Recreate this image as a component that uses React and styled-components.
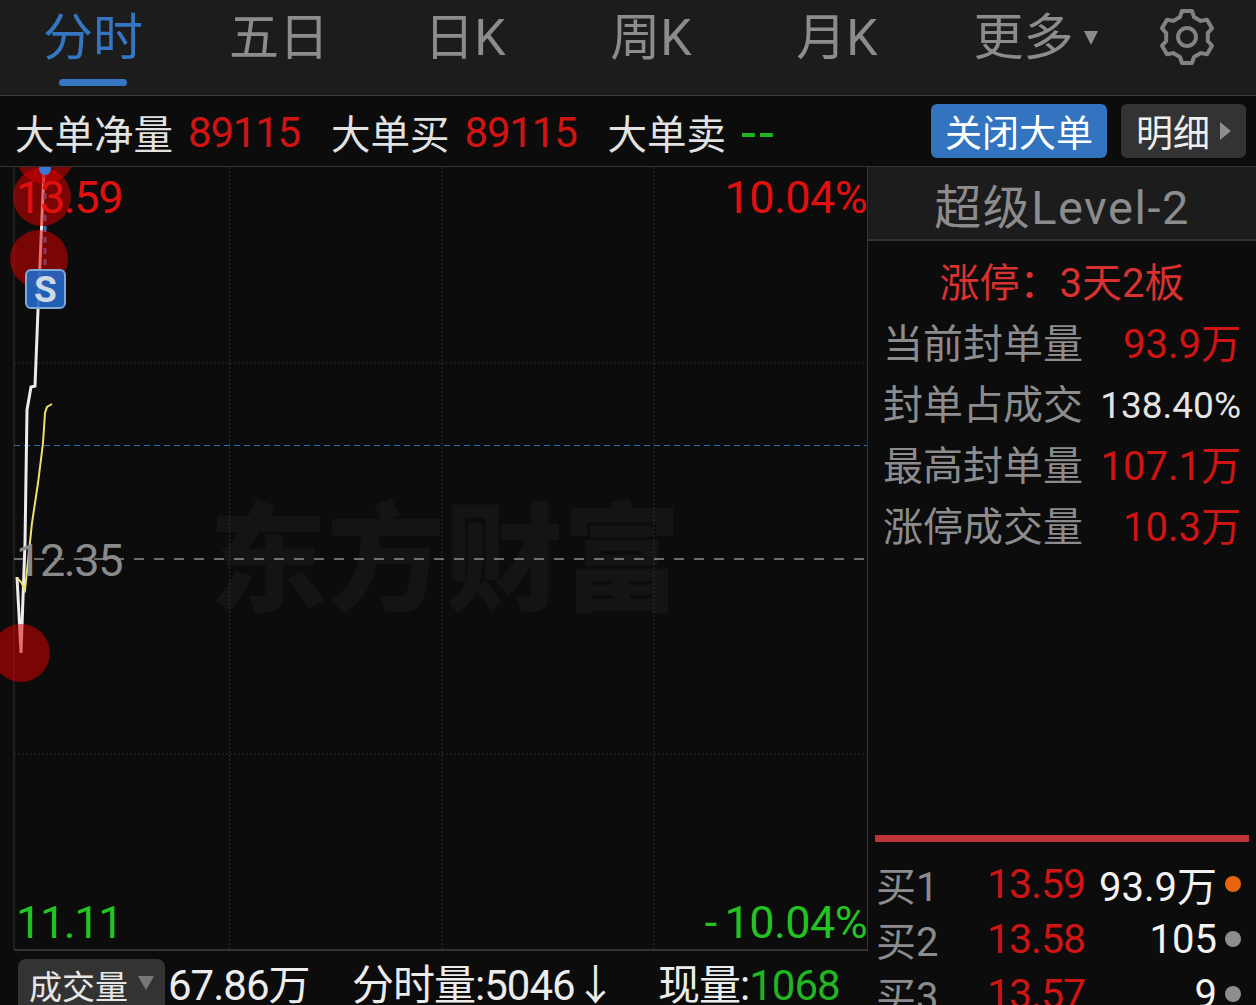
import React from 'react';
import styled, { createGlobalStyle } from 'styled-components';

const RED = '#d01414';
const GREEN = '#22b522';
const GRAY = '#8c8c8e';

const tabs = ['分时', '五日', '日K', '周K', '月K'];
const sealRows = [
	{ label: '当前封单量', value: '93.9万', color: RED, size: 40 },
	{ label: '封单占成交', value: '138.40%', color: '#e4e4e4', size: 37 },
	{ label: '最高封单量', value: '107.1万', color: RED, size: 40 },
	{ label: '涨停成交量', value: '10.3万', color: RED, size: 40 },
];
const bids = [
	{ label: '买1', price: '13.59', volume: '93.9万', dot: '#e8640f' },
	{ label: '买2', price: '13.58', volume: '105', dot: '#8e8e92' },
	{ label: '买3', price: '13.57', volume: '9', dot: '#8e8e92' },
];

// six flat teeth, one outline rotated around the centre
function gearPath() {
	const tooth = [
		[-7, -20],
		[-5, -26],
		[5, -26],
		[7, -20],
	];
	const points = [];
	for (let k = 0; k < 6; k++) {
		const a = (k * Math.PI) / 3;
		tooth.forEach(([x, y]) => {
			const px = 30 + x * Math.cos(a) - y * Math.sin(a);
			const py = 30 + x * Math.sin(a) + y * Math.cos(a);
			points.push(`${px.toFixed(1)} ${py.toFixed(1)}`);
		});
	}
	return `M${points.join('L')}Z`;
}

function GearIcon() {
	return (
		<svg width='60' height='60' viewBox='0 0 60 60' fill='none' stroke='#828284' strokeWidth='4'>
			<path d={gearPath()} strokeLinejoin='round' />
			<circle cx='30' cy='30' r='9' />
		</svg>
	);
}

function PriceChart() {
	return (
		<ChartSvg viewBox='0 0 868 784'>
			<g stroke='#2c2c2c' strokeWidth='1' strokeDasharray='2 2'>
				<line x1='229.5' y1='0' x2='229.5' y2='782' />
				<line x1='442' y1='0' x2='442' y2='782' />
				<line x1='654' y1='0' x2='654' y2='782' />
				<line x1='14' y1='196' x2='867' y2='196' />
				<line x1='14' y1='587' x2='867' y2='587' />
			</g>
			<line x1='14' y1='0' x2='14' y2='783' stroke='#333' />
			<line x1='867.5' y1='0' x2='867.5' y2='784' stroke='#333' />
			<line x1='14' y1='783' x2='868' y2='783' stroke='#333' strokeWidth='2' />
			<line x1='14' y1='278.5' x2='867' y2='278.5' stroke='#2f6cae' strokeDasharray='6 4' />
			<line x1='14' y1='392' x2='867' y2='392' stroke='#8e8e8e' strokeWidth='1.5' strokeDasharray='10 10' />
			<polyline
				points='17,410 21,486 25,376 27,243 31,220 35,219 38,143 44,3'
				fill='none'
				stroke='#ececec'
				strokeWidth='3'
			/>
			<polyline
				points='17,411 21,415 25,423 32,356 38,316 43,276 45,246 47,240 52,237'
				fill='none'
				stroke='#eee06a'
				strokeWidth='2'
			/>
			<line x1='45' y1='4' x2='45' y2='105' stroke='#3a78c8' strokeWidth='3' strokeDasharray='6 5' />
			<g fill='rgba(220,0,0,.53)'>
				<circle cx='45' cy='-12' r='29' />
				<circle cx='42' cy='30' r='29' />
				<circle cx='39' cy='92' r='29' />
				<circle cx='21' cy='486' r='29' />
			</g>
			<circle cx='45' cy='2' r='6' fill='#3a78d8' />
		</ChartSvg>
	);
}

export default function App() {
	return (
		<>
			<GlobalStyle />
			<Page>
				<TabBar>
					{tabs.map((tab, i) => (
						<Tab key={tab} $active={i === 0}>
							{tab}
						</Tab>
					))}
					<Tab>
						更多
						<MoreCaret />
					</Tab>
					<GearCell>
						<GearIcon />
					</GearCell>
				</TabBar>
				<OrderBar>
					<Stat>大单净量</Stat>
					<StatValue>89115</StatValue>
					<Stat>大单买</Stat>
					<StatValue>89115</StatValue>
					<Stat>大单卖</Stat>
					<EmptyValue>--</EmptyValue>
					<CloseButton>关闭大单</CloseButton>
					<DetailButton>
						明细
						<DetailCaret />
					</DetailButton>
				</OrderBar>
				<Main>
					<LeftColumn>
						<Chart>
							<Watermark>东方财富</Watermark>
							<PriceChart />
							<Marker>S</Marker>
							<AxisLabel $color='#e01010' $top={8}>
								13.59
							</AxisLabel>
							<AxisLabel $color='#e01010' $top={8} $right>
								10.04%
							</AxisLabel>
							<AxisLabel $color='#8a8a8a' $top={371}>
								12.35
							</AxisLabel>
							<AxisLabel $color='#22c322' $top={733}>
								11.11
							</AxisLabel>
							<AxisLabel $color='#22c322' $top={733} $right>
								<Minus>-</Minus>10.04%
							</AxisLabel>
						</Chart>
						<VolumeBar>
							<VolumeSelect>
								成交量
								<VolumeCaret />
							</VolumeSelect>
							<VolumeText $width={184} $first>
								67.86万
							</VolumeText>
							<VolumeText $width={306}>分时量:5046↓</VolumeText>
							<VolumeText>
								现量:<Green>1068</Green>
							</VolumeText>
						</VolumeBar>
					</LeftColumn>
					<Side>
						<SideHeader>超级Level-2</SideHeader>
						<LimitStatus>涨停{'\uFF1A'}3天2板</LimitStatus>
						{sealRows.map((row) => (
							<SealRow key={row.label}>
								<SealLabel>{row.label}</SealLabel>
								<SealValue $color={row.color} $size={row.size}>
									{row.value}
								</SealValue>
							</SealRow>
						))}
						<BookRule />
						{bids.map((bid) => (
							<BidRow key={bid.label}>
								<BidLabel>{bid.label}</BidLabel>
								<BidPrice>{bid.price}</BidPrice>
								<BidVolume>{bid.volume}</BidVolume>
								<BidDot $color={bid.dot} />
							</BidRow>
						))}
					</Side>
				</Main>
			</Page>
		</>
	);
}

const GlobalStyle = createGlobalStyle`
	html, body {
		margin: 0;
		background: #0c0c0c;
	}
	* {
		box-sizing: border-box;
	}
	body {
		font-family: Roboto, "Noto Sans CJK SC", sans-serif;
	}
`;
const Page = styled.div`
	width: 1256px;
	height: 1005px;
	overflow: hidden;
	background: #0c0c0c;
`;
const TabBar = styled.div`
	display: grid;
	grid-template-columns: repeat(6, 186px) 140px;
	height: 96px;
	background: #1c1c1c;
	border-bottom: 1px solid #3c3c3c;
`;
const Tab = styled.div`
	position: relative;
	display: flex;
	justify-content: center;
	padding-top: 5px;
	font-size: 50px;
	line-height: 66px;
	color: ${(p) => (p.$active ? '#3576c2' : GRAY)};
	${(p) =>
		p.$active &&
		`&::after {
		content: '';
		position: absolute;
		left: 59px;
		top: 79px;
		width: 68px;
		height: 7px;
		border-radius: 4px;
		background: #3576c2;
	}`}
`;
const MoreCaret = styled.span`
	align-self: flex-start;
	margin: 26px -25px 0 10px;
	border-top: 14px solid ${GRAY};
	border-left: 7.5px solid transparent;
	border-right: 7.5px solid transparent;
`;
const GearCell = styled.div`
	display: flex;
	justify-content: center;
	padding: 7px 0 0 2px;
`;
const OrderBar = styled.div`
	display: flex;
	align-items: center;
	height: 71px;
	padding: 0 10px 0 15px;
	border-bottom: 1px solid #333;
`;
const Stat = styled.span`
	font-size: 39.5px;
	color: #e2e2e2;
	margin-right: 15px;
	white-space: nowrap;
`;
const StatValue = styled.span`
	font-size: 42px;
	letter-spacing: -1.2px;
	color: ${RED};
	margin: 2px 31px 0 0;
`;
const EmptyValue = styled.span`
	margin-top: 4px;
	font-size: 54px;
	letter-spacing: 3px;
	line-height: 60px;
	color: ${GREEN};
`;
const CloseButton = styled.div`
	display: flex;
	align-items: center;
	justify-content: center;
	width: 176px;
	height: 54px;
	margin-left: auto;
	border-radius: 6px;
	background: #3274c0;
	color: #fff;
	font-size: 37px;
`;
const DetailButton = styled.div`
	display: flex;
	align-items: center;
	justify-content: center;
	width: 125px;
	height: 54px;
	margin-left: 14px;
	border-radius: 6px;
	background: #333;
	color: #eee;
	font-size: 37px;
`;
const DetailCaret = styled.span`
	margin-left: 10px;
	border-left: 11px solid #8e8e8e;
	border-top: 9px solid transparent;
	border-bottom: 9px solid transparent;
`;
const Main = styled.div`
	display: flex;
`;
const LeftColumn = styled.div`
	width: 868px;
	flex-shrink: 0;
`;
const Chart = styled.div`
	position: relative;
	height: 784px;
	overflow: hidden;
`;
const ChartSvg = styled.svg`
	position: absolute;
	inset: 0;
	width: 868px;
	height: 784px;
	overflow: hidden;
`;
const Watermark = styled.div`
	position: absolute;
	left: 209px;
	top: 320px;
	font-size: 118px;
	line-height: 150px;
	font-weight: 900;
	white-space: nowrap;
	color: #141414;
`;
const Marker = styled.div`
	position: absolute;
	left: 25px;
	top: 102px;
	width: 41px;
	height: 40px;
	display: flex;
	align-items: center;
	justify-content: center;
	border: 2px solid #7fa7d8;
	border-radius: 6px;
	background: rgba(34, 104, 200, 0.9);
	color: #cfd9e6;
	font-size: 37px;
	font-weight: 700;
`;
const AxisLabel = styled.div`
	position: absolute;
	top: ${(p) => p.$top}px;
	${(p) => (p.$right ? 'right: 1px;' : 'left: 16px;')}
	font-size: 45px;
	letter-spacing: ${(p) => (p.$right ? '-0.6px' : '-1.4px')};
	line-height: 46px;
	color: ${(p) => p.$color};
`;
const Minus = styled.span`
	margin-right: 8px;
`;
const VolumeBar = styled.div`
	display: flex;
	align-items: flex-start;
	padding: 8px 0 0 18px;
	font-size: 42px;
	letter-spacing: -1px;
`;
const VolumeSelect = styled.div`
	display: flex;
	align-items: center;
	width: 147px;
	height: 52px;
	padding-left: 11px;
	border-radius: 8px 8px 0 0;
	background: #333;
	color: #e6e6e6;
	font-size: 33px;
	letter-spacing: 0;
	flex-shrink: 0;
`;
const VolumeCaret = styled.span`
	margin: -4px 0 0 10px;
	border-top: 14px solid #777;
	border-left: 8px solid transparent;
	border-right: 8px solid transparent;
`;
const VolumeText = styled.div`
	width: ${(p) => (p.$width ? `${p.$width}px` : 'auto')};
	margin-left: ${(p) => (p.$first ? '3px' : '0')};
	line-height: 54px;
	color: #ececec;
	white-space: nowrap;
`;
const Green = styled.span`
	color: ${GREEN};
`;
const Side = styled.div`
	width: 388px;
	height: 838px;
`;
const SideHeader = styled.div`
	display: flex;
	align-items: center;
	justify-content: center;
	height: 74px;
	background: #1c1c1c;
	border-bottom: 2px solid #333;
	color: ${GRAY};
	font-size: 47px;
	letter-spacing: 1.5px;
`;
const LimitStatus = styled.div`
	height: 74px;
	padding-top: 8px;
	text-align: center;
	font-size: 40px;
	line-height: 70px;
	color: #d93030;
`;
const SealRow = styled.div`
	display: flex;
	align-items: center;
	justify-content: space-between;
	height: 61px;
	padding: 0 15px;
`;
const SealLabel = styled.span`
	font-size: 40px;
	line-height: 52px;
	margin-top: -2px;
	color: ${GRAY};
`;
const SealValue = styled.span`
	font-size: ${(p) => p.$size}px;
	line-height: 52px;
	margin-top: -2px;
	color: ${(p) => p.$color};
`;
const BookRule = styled.div`
	height: 7px;
	margin: 276px 7px 13px;
	background: #c0333a;
`;
const BidRow = styled.div`
	display: grid;
	grid-template-columns: 111px 97px 1fr 16px;
	align-items: center;
	height: 55px;
	padding: 0 15px 0 8px;
`;
const BidLabel = styled.span`
	font-size: 40px;
	color: ${GRAY};
	white-space: nowrap;
`;
const BidPrice = styled.span`
	font-size: 41px;
	letter-spacing: -1px;
	color: ${RED};
`;
const BidVolume = styled.span`
	font-size: 40px;
	color: #f2f2f2;
	text-align: right;
	padding-right: 8px;
	white-space: nowrap;
`;
const BidDot = styled.span`
	width: 16px;
	height: 16px;
	border-radius: 50%;
	background: ${(p) => p.$color};
`;
